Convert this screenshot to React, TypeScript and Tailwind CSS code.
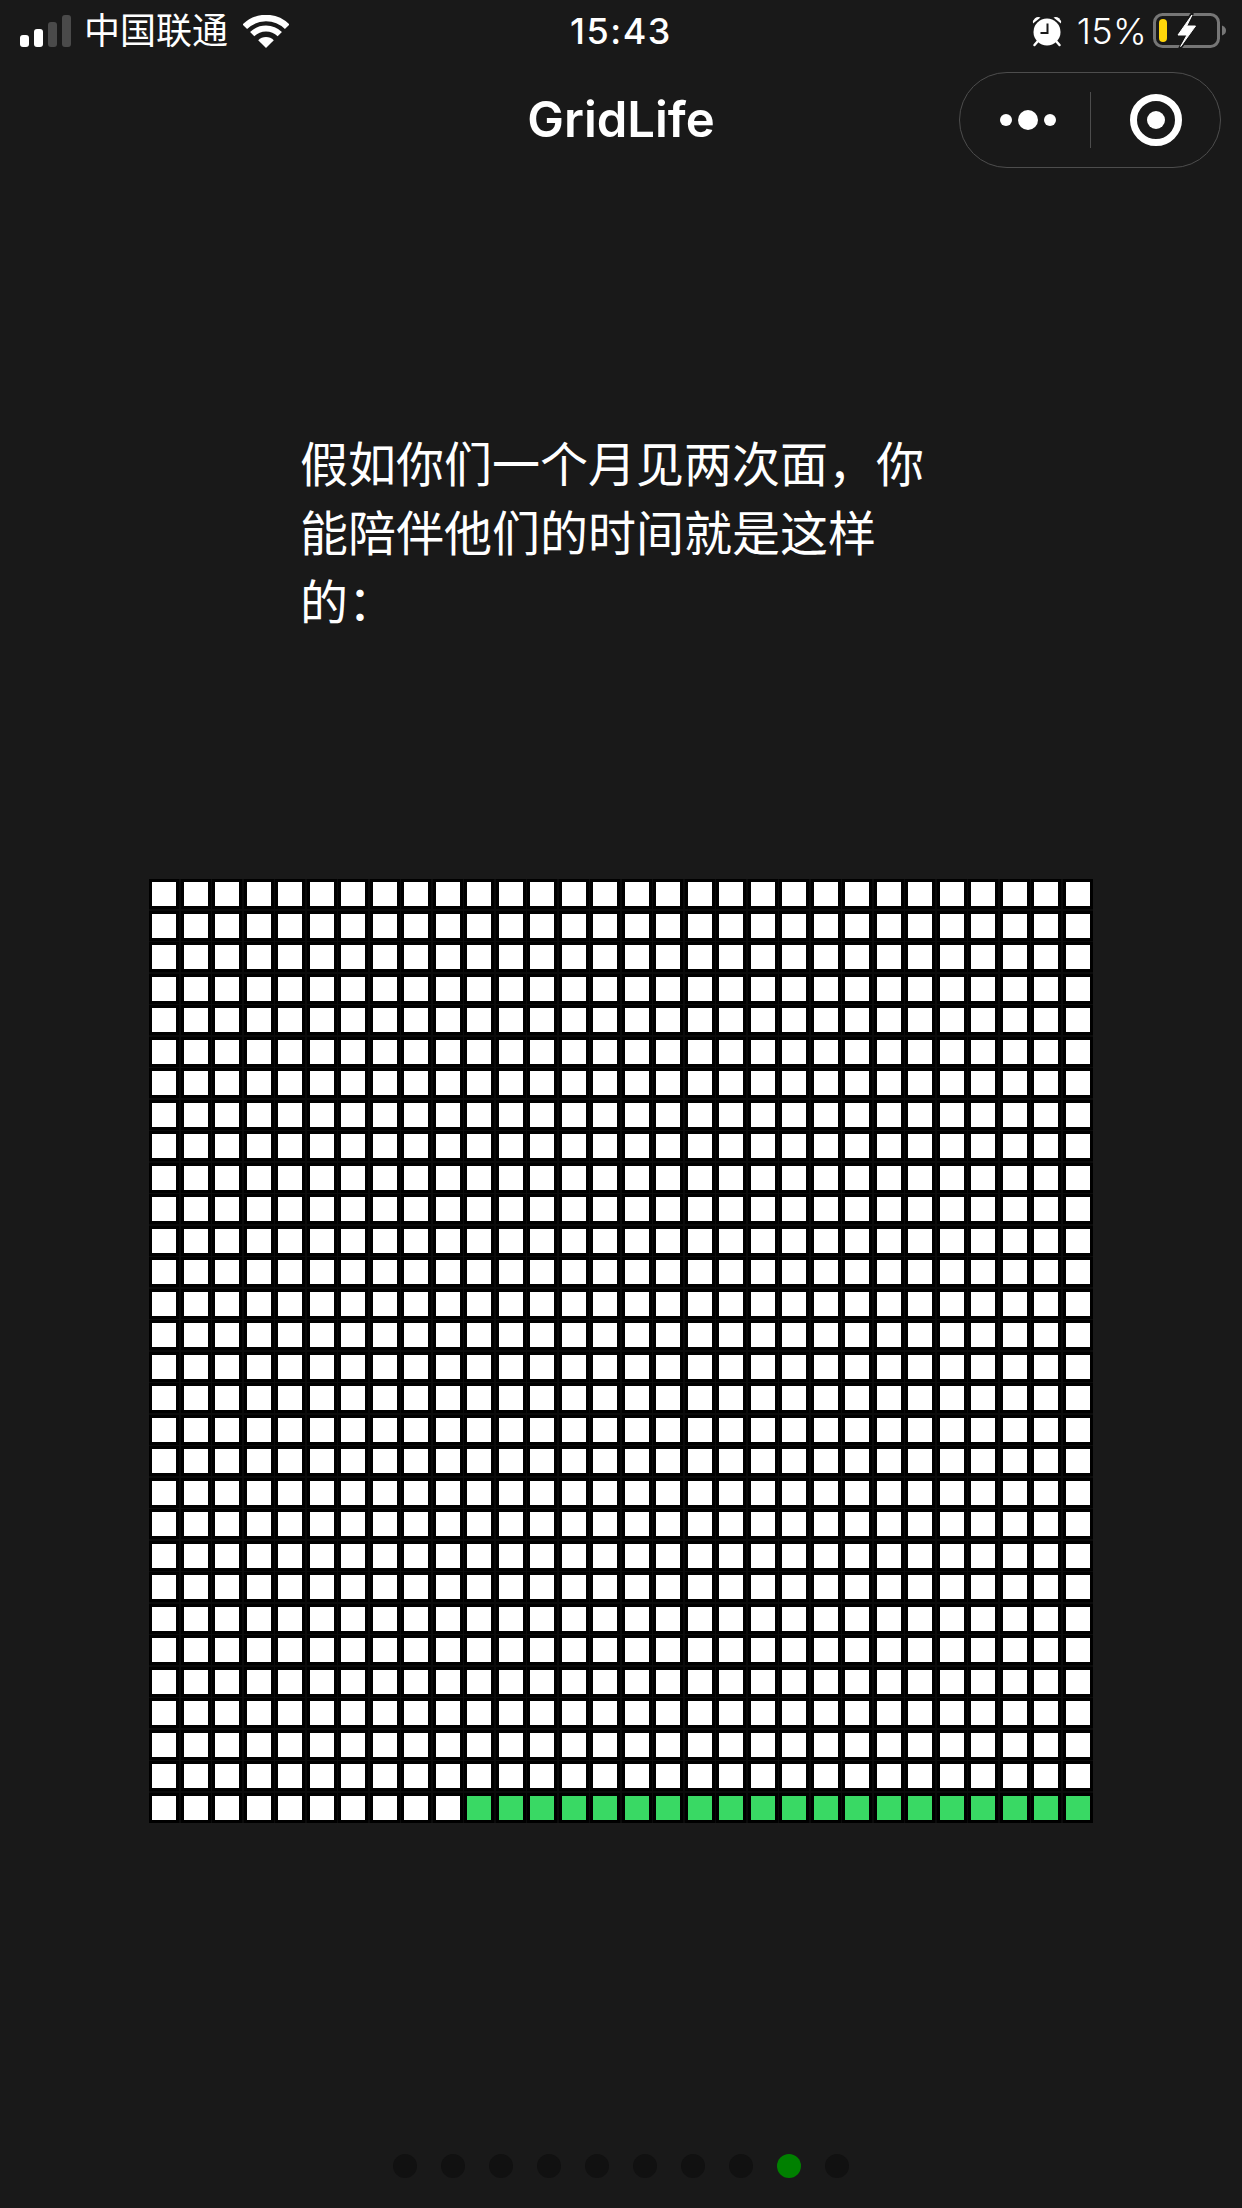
const cells = Array.from({ length: 900 }, (_, i) => i);
const dots = Array.from({ length: 10 }, (_, i) => i);

function SignalBars() {
  return (
    <div className="flex items-end gap-[5px]">
      <div className="w-[9px] h-[12px] rounded-[3px] bg-white" />
      <div className="w-[9px] h-[18px] rounded-[3px] bg-white" />
      <div className="w-[9px] h-[25px] rounded-[3px] bg-[#4a4a4a]" />
      <div className="w-[9px] h-[32px] rounded-[3px] bg-[#4a4a4a]" />
    </div>
  );
}

function Wifi() {
  return (
    <svg width="46" height="33" viewBox="0 0 46 33" fill="none">
      <path d="M1.8 11.8A30 30 0 0 1 44.2 11.8" stroke="white" strokeWidth="6.5" />
      <path d="M9.2 19.2A19.5 19.5 0 0 1 36.8 19.2" stroke="white" strokeWidth="6" />
      <path d="M23 33L15.2 25.2A11 11 0 0 1 30.8 25.2Z" fill="white" />
    </svg>
  );
}

function Alarm() {
  return (
    <svg width="30" height="32" viewBox="0 0 30 32" fill="none">
      <path d="M1 8.5A5.5 5.5 0 0 1 8.5 2.5Z" fill="white" />
      <path d="M29 8.5A5.5 5.5 0 0 0 21.5 2.5Z" fill="white" />
      <path d="M6 26L2.5 30M24 26L27.5 30" stroke="white" strokeWidth="2.5" strokeLinecap="round" />
      <circle cx="15" cy="17" r="13.5" fill="white" />
      <path d="M15.5 8.5V18H8.5" stroke="#191919" strokeWidth="2" />
    </svg>
  );
}

function Battery() {
  return (
    <svg width="74" height="36" viewBox="0 0 74 36" fill="none">
      <rect x="1.5" y="1.5" width="64" height="32" rx="8" stroke="#767676" strokeWidth="3" />
      <path d="M69 12.5C72 13.5 73 15.5 73 17.5C73 19.5 72 21.5 69 22.5Z" fill="#767676" />
      <rect x="6" y="6" width="8" height="23" rx="4" fill="#ffd60a" />
      <path d="M39.5 0L24 22.5H33L26.5 36L43.5 13H34.5Z" fill="#191919" stroke="#191919" strokeWidth="3" />
      <path d="M39 2L25 22H34L27.7 33.5L42.5 13H33.7Z" fill="white" stroke="white" strokeWidth="1" />
    </svg>
  );
}

function Capsule() {
  return (
    <div className="justify-self-end flex items-center w-[262px] h-[96px] mr-[21px] rounded-full border border-[#4d4d4d]">
      <div className="w-[130px] flex items-center justify-center gap-[6px] pl-[6px]">
        <div className="w-[12px] h-[12px] rounded-full bg-white" />
        <div className="w-[20px] h-[20px] rounded-full bg-white" />
        <div className="w-[12px] h-[12px] rounded-full bg-white" />
      </div>
      <div className="w-px h-[56px] bg-[#4d4d4d]" />
      <div className="flex-1 flex items-center justify-center">
        <div className="w-[52px] h-[52px] rounded-full border-[7px] border-white flex items-center justify-center">
          <div className="w-[18px] h-[18px] rounded-full bg-white" />
        </div>
      </div>
    </div>
  );
}

export default function App() {
  return (
    <div
      className="w-[1242px] h-[2208px] bg-[#191919] text-white overflow-hidden flex flex-col"
      style={{ fontFamily: '"Inter", "Noto Sans CJK SC", sans-serif' }}
    >
      <div className="h-[62px] grid grid-cols-[1fr_auto_1fr] items-center">
        <div className="flex items-center pl-[20px]">
          <SignalBars />
          <span className="ml-[13px] text-[36px] leading-[46px] font-normal">中国联通</span>
          <div className="ml-[15px]">
            <Wifi />
          </div>
        </div>
        <span className="text-[36px] leading-[44px] font-medium tracking-[1.5px]">15:43</span>
        <div className="flex items-center justify-end pr-[15px]">
          <Alarm />
          <span className="ml-[15px] mr-[6px] text-[36px] leading-[44px] font-light tracking-[0.3px]">15%</span>
          <Battery />
        </div>
      </div>

      <div className="h-[116px] grid grid-cols-[1fr_auto_1fr] items-center">
        <div />
        <h1 className="text-[49px] leading-[60px] font-semibold">GridLife</h1>
        <Capsule />
      </div>

      <p className="mt-[252px] ml-[300px] w-[640px] text-[48px] leading-[69px] font-normal">
        假如你们一个月见两次面，你能陪伴他们的时间就是这样的：
      </p>

      <div className="mt-[242px] ml-[149px] w-[944px] grid grid-cols-[repeat(30,30px)] gap-[1.517px] bg-[#0a0a0a]">
        {cells.map((i) => (
          <div
            key={i}
            className={`h-[30px] border-[3px] border-black ${i >= 880 ? "bg-[#39d964]" : "bg-white"}`}
          />
        ))}
      </div>

      <div className="mt-[331px] ml-[393px] flex gap-[24px]">
        {dots.map((i) => (
          <div
            key={i}
            className={`w-[24px] h-[24px] rounded-full ${i === 8 ? "bg-[#008000]" : "bg-[#111111]"}`}
          />
        ))}
      </div>
    </div>
  );
}
